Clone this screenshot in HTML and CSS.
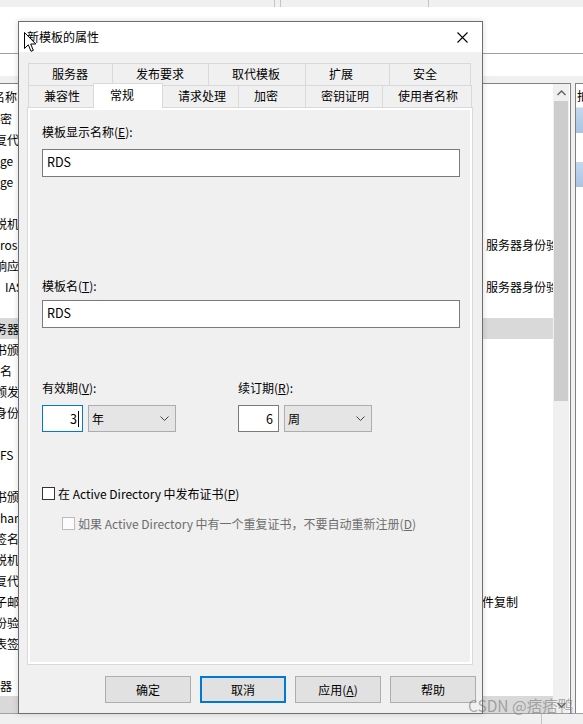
FILE: index.html
```html
<!DOCTYPE html>
<html lang="zh-CN">
<head>
<meta charset="utf-8">
<title>新模板的属性</title>
<link rel="stylesheet" href="styles.css">
</head>
<body>
<div class="app">
  <div class="toolbar">
    <div class="tb-seg tb-a"></div>
    <div class="tb-seg tb-b"></div>
    <div class="tb-seg tb-c"></div>
    <div class="tb-seg tb-d"></div>
  </div>
  <div class="topwhite"></div>
  <div class="secondwhite"></div>
  <div class="gapband"></div>
  <div class="panes">
    <div class="list">
      <div class="listbody">
        <div class="lrow head"><div class="c1 hd">名称</div><div class="sp"></div><div class="c2"></div></div>
        <div class="lrow"><div class="c1 l">密</div><div class="sp"></div><div class="c2"></div></div>
        <div class="lrow"><div class="c1">复代</div><div class="sp"></div><div class="c2"></div></div>
        <div class="lrow"><div class="c1 l">ge</div><div class="sp"></div><div class="c2"></div></div>
        <div class="lrow"><div class="c1 l">ge</div><div class="sp"></div><div class="c2"></div></div>
        <div class="lrow"><div class="c1"></div><div class="sp"></div><div class="c2"></div></div>
        <div class="lrow"><div class="c1">脱机</div><div class="sp"></div><div class="c2"></div></div>
        <div class="lrow"><div class="c1 l">ros</div><div class="sp"></div><div class="c2">服务器身份验证</div></div>
        <div class="lrow"><div class="c1">响应</div><div class="sp"></div><div class="c2"></div></div>
        <div class="lrow"><div class="c1 ias">IAS</div><div class="sp"></div><div class="c2">服务器身份验证</div></div>
        <div class="lrow"><div class="c1"></div><div class="sp"></div><div class="c2"></div></div>
        <div class="lrow sel"><div class="c1">服务器</div><div class="sp"></div><div class="c2"></div></div>
        <div class="lrow"><div class="c1">书颁</div><div class="sp"></div><div class="c2"></div></div>
        <div class="lrow"><div class="c1 l">名</div><div class="sp"></div><div class="c2"></div></div>
        <div class="lrow"><div class="c1">颁发</div><div class="sp"></div><div class="c2"></div></div>
        <div class="lrow"><div class="c1">身份</div><div class="sp"></div><div class="c2"></div></div>
        <div class="lrow"><div class="c1"></div><div class="sp"></div><div class="c2"></div></div>
        <div class="lrow"><div class="c1 l">FS</div><div class="sp"></div><div class="c2"></div></div>
        <div class="lrow"><div class="c1"></div><div class="sp"></div><div class="c2"></div></div>
        <div class="lrow"><div class="c1">书颁</div><div class="sp"></div><div class="c2"></div></div>
        <div class="lrow"><div class="c1 l">hang</div><div class="sp"></div><div class="c2"></div></div>
        <div class="lrow"><div class="c1">签名</div><div class="sp"></div><div class="c2"></div></div>
        <div class="lrow"><div class="c1">脱机</div><div class="sp"></div><div class="c2"></div></div>
        <div class="lrow"><div class="c1">复代</div><div class="sp"></div><div class="c2"></div></div>
        <div class="lrow"><div class="c1">子邮</div><div class="sp"></div><div class="c2 cut">件复制</div></div>
        <div class="lrow"><div class="c1">份验</div><div class="sp"></div><div class="c2"></div></div>
        <div class="lrow"><div class="c1">表签</div><div class="sp"></div><div class="c2"></div></div>
        <div class="lrow"><div class="c1"></div><div class="sp"></div><div class="c2"></div></div>
        <div class="lrow"><div class="c1 l">器</div><div class="sp"></div><div class="c2"></div></div>
        <div class="lrow sel"><div class="c1"></div><div class="sp"></div><div class="c2"></div></div>
      </div>
      <div class="scrollbar">
        <div class="sb-btn"><svg width="9" height="6" viewBox="0 0 9 6"><polyline points="0.5,5 4.5,1 8.5,5" fill="none" stroke="#606060" stroke-width="1.4"/></svg></div>
        <div class="sb-thumb"></div>
        <div class="sb-track"></div>
        <div class="sb-btn"><svg width="9" height="6" viewBox="0 0 9 6"><polyline points="0.5,1 4.5,5 8.5,1" fill="none" stroke="#606060" stroke-width="1.4"/></svg></div>
      </div>
    </div>
    <div class="gapcol"></div>
    <div class="rightpane">
      <div class="rp-head">拍</div>
      <div class="rp-row blue"></div>
      <div class="rp-row"></div>
      <div class="rp-row blue"></div>
    </div>
  </div>
  <div class="statusbar"><div class="st-a"></div><div class="st-b"></div></div>
</div>

<div class="dialog">
  <div class="titlebar">
    <span class="title">新模板的属性</span>
    <svg class="close" width="11" height="11" viewBox="0 0 11 11"><path d="M0.5 0.5 L10.5 10.5 M10.5 0.5 L0.5 10.5" stroke="#000" stroke-width="1.1"/></svg>
  </div>
  <div class="dbody">
    <div class="tabs">
      <div class="tabrow row1">
        <div class="tab t1">服务器</div>
        <div class="tab t2">发布要求</div>
        <div class="tab t3">取代模板</div>
        <div class="tab t4">扩展</div>
        <div class="tab t5">安全</div>
      </div>
      <div class="tabrow row2">
        <div class="tab u1">兼容性</div>
        <div class="tab u2 active">常规</div>
        <div class="tab u3">请求处理</div>
        <div class="tab u4">加密</div>
        <div class="tab u5">密钥证明</div>
        <div class="tab u6">使用者名称</div>
      </div>
    </div>
    <div class="panel">
      <div class="page">
        <div class="label l1">模板显示名称(<u>E</u>):</div>
        <div class="textbox tb1">RDS</div>
        <div class="label l2">模板名(<u>T</u>):</div>
        <div class="textbox tb2">RDS</div>
        <div class="periods">
          <div class="group">
            <div class="label">有效期(<u>V</u>):</div>
            <div class="fields">
              <div class="num focus">3<span class="caret"></span></div>
              <div class="combo"><span>年</span><svg width="9" height="5" viewBox="0 0 9 5"><polyline points="0.5,0.5 4.5,4.5 8.5,0.5" fill="none" stroke="#404040" stroke-width="1"/></svg></div>
            </div>
          </div>
          <div class="group">
            <div class="label">续订期(<u>R</u>):</div>
            <div class="fields">
              <div class="num">6</div>
              <div class="combo"><span>周</span><svg width="9" height="5" viewBox="0 0 9 5"><polyline points="0.5,0.5 4.5,4.5 8.5,0.5" fill="none" stroke="#404040" stroke-width="1"/></svg></div>
            </div>
          </div>
        </div>
        <div class="check c-pub"><span class="box"></span><span>在 Active Directory 中发布证书(<u>P</u>)</span></div>
        <div class="check c-dup disabled"><span class="box"></span><span>如果 Active Directory 中有一个重复证书，不要自动重新注册(<u>D</u>)</span></div>
      </div>
    </div>
    <div class="buttons">
      <div class="btn">确定</div>
      <div class="btn default">取消</div>
      <div class="btn">应用(<u>A</u>)</div>
      <div class="btn">帮助</div>
    </div>
  </div>
</div>

<div class="watermark">CSDN @痞痞鸭</div>
<svg class="cursor" width="13" height="21" viewBox="0 0 13 21"><path d="M0.5 0.5 L0.5 16.5 L4.3 12.8 L7 19.3 L9.3 18.3 L6.7 12 L11.8 12 Z" fill="#fff" stroke="#000" stroke-width="1" stroke-linejoin="miter"/></svg>
</body>
</html>
```

FILE: styles.css
```css
html, body {
  margin: 0;
  padding: 0;
}
body {
  width: 583px;
  height: 724px;
  overflow: hidden;
  position: relative;
  background: #f0f0f0;
  font-family: "Noto Sans CJK SC", "Microsoft YaHei", sans-serif;
  font-size: 12px;
  color: #000;
}
u { text-decoration: underline; text-underline-offset: 1px; }

/* background MMC window */
.app {
  display: flex;
  flex-direction: column;
  height: 724px;
}
.toolbar {
  height: 7px;
  display: flex;
  background: #f0f0f0;
}
.tb-seg { height: 7px; border-right: 1px solid #c4c4c4; }
.tb-a { width: 274px; }
.tb-b { width: 5px; }
.tb-c { width: 147px; }
.tb-d { flex: 1; border-right: none; }
.topwhite {
  height: 46px;
  background: #fff;
  border-bottom: 1px solid #a0a0a0;
}
.secondwhite { height: 22px; background: #fff; }
.gapband { height: 7px; background: #f0f0f0; }
.panes {
  height: 630px;
  display: flex;
}
.list {
  width: 570px;
  display: flex;
  background: #fff;
  border-top: 1px solid #828282;
  border-right: 1px solid #828282;
  overflow: hidden;
}
.listbody {
  width: 553px;
  overflow: hidden;
}
.lrow {
  height: 21px;
  display: flex;
  align-items: center;
  white-space: nowrap;
}
.lrow.head { height: 24px; }
.lrow.sel { background: #d9d9d9; }
.c1 {
  width: 19px;
  flex: none;
  display: flex;
  justify-content: flex-end;
  overflow: hidden;
}
.c1.hd { width: 17px; }
.c1.l { justify-content: flex-start; }
.c1.ias { width: 23px; }
.sp { width: 464px; flex: none; }
.c1.hd + .sp { width: 466px; }
.c1.ias + .sp { width: 460px; }
.c2 {
  width: 70px;
  flex: none;
  overflow: hidden;
  padding-left: 3px;
  box-sizing: border-box;
}
.c2.cut { padding-left: 0; text-indent: -1px; }
.scrollbar {
  width: 16px;
  display: flex;
  flex-direction: column;
  background: #f0f0f0;
}
.sb-btn {
  height: 17px;
  display: flex;
  align-items: center;
  justify-content: center;
}
.sb-thumb { height: 300px; background: #cdcdcd; margin: 0 1px; }
.sb-track { flex: 1; }
.gapcol { width: 4px; background: #f0f0f0; }
.rightpane {
  flex: 1;
  background: #fff;
  border-top: 1px solid #828282;
  border-left: 1px solid #828282;
  overflow: hidden;
}
.rp-head {
  height: 23px;
  line-height: 23px;
  padding-left: 1px;
  border-bottom: 1px solid #e5e5e5;
  white-space: nowrap;
}
.rp-row { height: 25px; }
.rp-row.blue { background: linear-gradient(#c3d8ee, #a9c4e2); }
.rp-row:nth-child(3) { height: 29px; }
.statusbar {
  height: 10px;
  border-top: 1px solid #a0a0a0;
  background: #f0f0f0;
  display: flex;
}
.st-a { width: 541px; border-right: 1px solid #c4c4c4; }

/* dialog */
.dialog {
  position: absolute;
  left: 18px;
  top: 21px;
  width: 465px;
  height: 693px;
  box-sizing: border-box;
  border: 1px solid #6e6e6e;
  background: #f0f0f0;
  display: flex;
  flex-direction: column;
  box-shadow: 0 0 6px rgba(0,0,0,0.15);
}
.titlebar {
  height: 30px;
  flex: none;
  background: #fff;
  display: flex;
  align-items: center;
  justify-content: space-between;
  padding: 0 14px 0 8px;
}
.title { font-size: 12px; line-height: 16px; }
.dbody {
  flex: 1;
  display: flex;
  flex-direction: column;
  padding: 11px 9px 10px 8px;
  min-height: 0;
}
.tabs { margin-left: 1px; }
.tabrow { display: flex; height: 22px; }
.row2 { align-items: flex-end; }
.tab {
  box-sizing: border-box;
  height: 22px;
  border-top: 1px solid #d9d9d9;
  border-right: 1px solid #d9d9d9;
  background: #f0f0f0;
  line-height: 20px;
  white-space: nowrap;
  flex: none;
}
.row1 .tab { padding-left: 23px; }
.row2 .tab { padding-left: 15px; }
.tab.t1, .tab.u1 { border-left: 1px solid #d9d9d9; }
.t1 { width: 85px; }
.t2 { width: 96px; }
.t3 { width: 97px; }
.t4 { width: 84px; }
.t5 { width: 81px; }
.u1 { width: 66px; }
.u2 { width: 70px; }
.u3 { width: 76px; }
.u4 { width: 67px; }
.u5 { width: 77px; }
.u6 { width: 89px; }
.row2 .tab.active {
  position: relative;
  height: 25px;
  margin-left: -1px;
  margin-bottom: -1px;
  border-left: 1px solid #d9d9d9;
  background: #fff;
  padding-left: 16px;
  line-height: 22px;
}
.panel {
  flex: 1;
  border: 1px solid #d9d9d9;
  background: #fff;
  padding: 2px;
  display: flex;
  min-height: 0;
}
.page {
  flex: 1;
  background: #f0f0f0;
  padding: 14px 10px 0 12px;
}
.label { line-height: 16px; height: 16px; white-space: nowrap; }
.textbox {
  box-sizing: border-box;
  height: 28px;
  border: 1px solid #7a7a7a;
  background: #fff;
  padding: 0 4px;
  line-height: 24px;
  font-size: 12.5px;
}
.tb1 { margin-top: 9px; }
.l2 { margin-top: 101px; }
.tb2 { margin-top: 6px; }
.periods {
  display: flex;
  margin-top: 52px;
}
.group { width: 196px; }
.fields {
  display: flex;
  gap: 5px;
  margin-top: 9px;
}
.num {
  box-sizing: border-box;
  width: 41px;
  height: 27px;
  border: 1px solid #7a7a7a;
  background: #fff;
  text-align: right;
  padding-right: 5px;
  line-height: 24px;
  font-size: 12.5px;
  display: flex;
  justify-content: flex-end;
  align-items: center;
}
.num.focus { border-color: #0078d7; padding-right: 3px; }
.caret {
  display: inline-block;
  width: 1px;
  height: 16px;
  background: #000;
  margin-left: 1px;
}
.combo {
  box-sizing: border-box;
  width: 88px;
  height: 27px;
  border: 1px solid #adadad;
  background: #e5e5e5;
  display: flex;
  align-items: center;
  justify-content: space-between;
  padding: 0 6px 0 3px;
}
.check {
  display: flex;
  align-items: center;
  height: 16px;
  white-space: nowrap;
}
.c-pub { margin-top: 53px; }
.c-dup { margin-top: 14px; margin-left: 20px; }
.box {
  box-sizing: border-box;
  width: 13px;
  height: 13px;
  border: 1px solid #333;
  background: #fff;
  margin-right: 3px;
  flex: none;
}
.disabled { color: #6d6d6d; }
.disabled .box { border-color: #bcbcbc; background: #fcfcfc; }
.buttons {
  display: flex;
  justify-content: flex-end;
  gap: 9px;
  margin-top: 11px;
  margin-right: -3px;
}
.btn {
  box-sizing: border-box;
  width: 86px;
  height: 27px;
  border: 1px solid #adadad;
  background: #e1e1e1;
  display: flex;
  align-items: center;
  justify-content: center;
}
.btn.default { border: 2px solid #0078d7; }

.watermark {
  position: absolute;
  left: 468px;
  top: 695px;
  font-size: 15.5px;
  line-height: 20px;
  color: rgba(110,110,110,0.55);
  white-space: nowrap;
}
.cursor {
  position: absolute;
  left: 24px;
  top: 32px;
}
```
